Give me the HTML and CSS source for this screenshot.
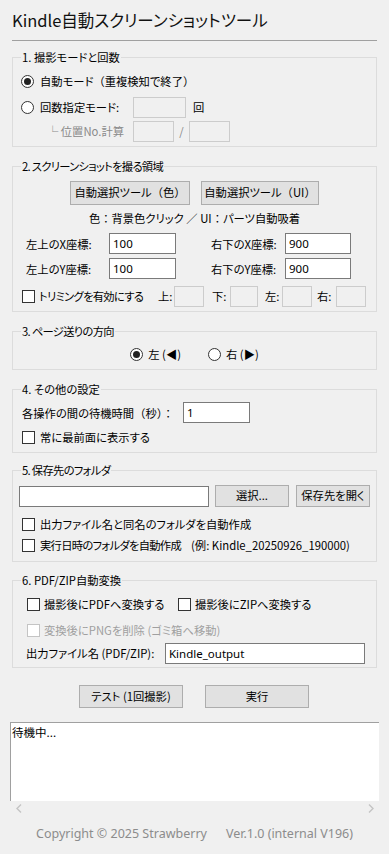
FILE: index.html
```html
<!DOCTYPE html>
<html lang="ja">
<head>
<meta charset="utf-8">
<title>Kindle自動スクリーンショットツール</title>
<link rel="stylesheet" href="styles.css">
</head>
<body>
<div class="app">
  <h1 class="title">Kindle自動スクリーンショットツール</h1>
  <div class="sep"></div>

  <fieldset class="group g1">
    <legend>1. 撮影モードと回数</legend>
    <div class="row r22">
      <span class="radio on"></span><span class="rtext">自動モード<span class="fw">（</span>重複検知で終了<span class="fw">）</span></span>
    </div>
    <div class="row r22 mt4">
      <span class="radio"></span><span class="rtext w-count">回数指定モード:</span>
      <input class="entry dis w53" type="text" disabled>
      <span class="unit">回</span>
    </div>
    <div class="row r22 mt2">
      <span class="sub">└ 位置No.計算</span>
      <input class="entry dis w41" type="text" disabled>
      <span class="slash">/</span>
      <input class="entry dis w41" type="text" disabled>
    </div>
  </fieldset>

  <fieldset class="group g2">
    <legend class="tight">2. スクリーンショットを撮る領域</legend>
    <div class="row btnrow">
      <button class="btn bw120">自動選択ツール<span class="fw">（</span>色<span class="fw">）</span></button>
      <button class="btn bw118">自動選択ツール<span class="fw">（</span>UI<span class="fw">）</span></button>
    </div>
    <div class="row hint">色<span class="fw">：</span>背景色クリック <span class="fw">／</span> UI<span class="fw">：</span>パーツ自動吸着</div>
    <div class="row r21 mt5">
      <span class="clabel l1">左上のX座標:</span>
      <input class="entry w67" type="text" value="100">
      <span class="clabel l2">右下のX座標:</span>
      <input class="entry w66" type="text" value="900">
    </div>
    <div class="row r21 mt4">
      <span class="clabel l1">左上のY座標:</span>
      <input class="entry w67" type="text" value="100">
      <span class="clabel l2">右下のY座標:</span>
      <input class="entry w66" type="text" value="900">
    </div>
    <div class="row r20 mt7">
      <span class="check c-trim"></span><span class="trimtext tight">トリミングを有効にする</span>
      <span class="tl t-up">上:</span><input class="entry dis w30" type="text" disabled>
      <span class="tl t-down">下:</span><input class="entry dis w28" type="text" disabled>
      <span class="tl t-left">左:</span><input class="entry dis w30" type="text" disabled>
      <span class="tl t-right">右:</span><input class="entry dis w30" type="text" disabled>
    </div>
  </fieldset>

  <fieldset class="group g3">
    <legend class="tight">3. ページ送りの方向</legend>
    <div class="row r20 center">
      <span class="radio on"></span><span class="dtext">左 (◀)</span>
      <span class="radio r-second"></span><span class="dtext">右 (▶)</span>
    </div>
  </fieldset>

  <fieldset class="group g4">
    <legend>4. その他の設定</legend>
    <div class="row r21">
      <span class="wait">各操作の間の待機時間<span class="fw">（</span>秒<span class="fw">）：</span></span>
      <input class="entry w67" type="text" value="1">
    </div>
    <div class="row r20 mt4">
      <span class="check c1"></span><span class="ctext">常に最前面に表示する</span>
    </div>
  </fieldset>

  <fieldset class="group g5">
    <legend class="tight">5. 保存先のフォルダ</legend>
    <div class="row r22">
      <input class="entry folder" type="text">
      <button class="btn sel">選択...</button>
      <button class="btn open">保存先を開く</button>
    </div>
    <div class="row r20 mt7">
      <span class="check c1"></span><span class="ctext">出力ファイル名と同名のフォルダを自動作成</span>
    </div>
    <div class="row r20 mt1">
      <span class="check c1"></span><span class="ctext tight">実行日時のフォルダを自動作成</span><span class="example">(例: Kindle_20250926_190000)</span>
    </div>
  </fieldset>

  <fieldset class="group g6">
    <legend>6. PDF/ZIP自動変換</legend>
    <div class="row r20">
      <span class="check c6"></span><span class="ctext6 pdf">撮影後にPDFへ変換する</span>
      <span class="check"></span><span class="ctext6">撮影後にZIPへ変換する</span>
    </div>
    <div class="row r20 mt6">
      <span class="check c6 dis"></span><span class="ctext6 gray">変換後にPNGを削除 (ゴミ箱へ移動)</span>
    </div>
    <div class="row r22 mt2">
      <span class="outlabel">出力ファイル名 (PDF/ZIP):</span>
      <input class="entry w200" type="text" value="Kindle_output">
    </div>
  </fieldset>

  <div class="actions">
    <button class="btn act">テスト (1回撮影)</button>
    <button class="btn act">実行</button>
  </div>

  <div class="log">待機中...</div>
  <div class="scroll">
    <svg class="arrow" width="6" height="9" viewBox="0 0 6 9"><path d="M5 0.5 L1 4.5 L5 8.5" fill="none" stroke="#c4c4c4" stroke-width="1.4"/></svg>
    <svg class="arrow" width="6" height="9" viewBox="0 0 6 9"><path d="M1 0.5 L5 4.5 L1 8.5" fill="none" stroke="#c4c4c4" stroke-width="1.4"/></svg>
  </div>
  <div class="footer">
    <span>Copyright © 2025 Strawberry</span>
    <span>Ver.1.0 (internal V196)</span>
  </div>
</div>
</body>
</html>
```

FILE: styles.css
```css
* { box-sizing: border-box; }

html, body {
  margin: 0;
  background: #f0f0f0;
}

body {
  font-family: "Noto Sans CJK JP", "Noto Sans", sans-serif;
  font-size: 11.3px;
  color: #000;
  font-feature-settings: "palt" 1;
}

.fw { font-feature-settings: "palt" 0; }
.tight { letter-spacing: -0.7px; }

.app {
  width: 389px;
  height: 854px;
  padding: 8px 12px 0 12px;
  overflow: hidden;
}

.title {
  margin: 0;
  font-size: 16.5px;
  font-weight: normal;
  line-height: 24px;
  height: 24px;
  color: #111;
  white-space: nowrap;
}

.sep {
  height: 1px;
  background: #a0a0a0;
  margin-top: 8px;
}

.group {
  border: 1px solid #dcdcdc;
  margin: 0;
  padding: 0 8px;
  min-width: 0;
}

.group legend {
  padding: 0 1px;
  font-size: 11.3px;
  line-height: 16px;
}

.g1 { margin-top: 8px; padding-top: 5px; padding-bottom: 4px; }
.g2 { margin-top: 11px; padding-top: 7px; padding-bottom: 5px; }
.g3 { margin-top: 11px; padding-top: 5px; padding-bottom: 5px; }
.g4 { margin-top: 11px; padding-top: 5px; padding-bottom: 5px; }
.g5 { margin-top: 9px; padding-top: 7px; padding-bottom: 6px; }
.g6 { margin-top: 10px; padding-top: 6px; padding-bottom: 3px; }

.row {
  display: flex;
  align-items: center;
  white-space: nowrap;
}

.r20 { height: 20px; }
.r21 { height: 21px; }
.r22 { height: 22px; }
.mt1 { margin-top: 1px; }
.mt2 { margin-top: 2px; }
.mt4 { margin-top: 4px; }
.mt5 { margin-top: 5px; }
.mt6 { margin-top: 6px; }
.mt7 { margin-top: 7px; }

.center { justify-content: center; }

.radio {
  width: 13px;
  height: 13px;
  flex: none;
  border: 1px solid #333;
  border-radius: 50%;
  background: #fff;
  display: flex;
  align-items: center;
  justify-content: center;
}

.radio.on::after {
  content: "";
  width: 7px;
  height: 7px;
  border-radius: 50%;
  background: #222;
}

.check {
  width: 13px;
  height: 13px;
  flex: none;
  border: 1px solid #333;
  background: #fff;
}

.check.dis { border-color: #c4c4c4; }

.entry {
  height: 21px;
  flex: none;
  margin: 0;
  padding: 0 3px;
  border: 1px solid #7a7a7a;
  background: #fff;
  font-family: "Noto Sans", "Noto Sans CJK JP", sans-serif;
  font-size: 11.5px;
  color: #000;
  outline: none;
}

.entry.dis {
  border-color: #cccccc;
  background: #f0f0f0;
}

.w28 { width: 28px; }
.w30 { width: 30px; }
.w41 { width: 41px; }
.w53 { width: 53px; }
.w66 { width: 66px; }
.w67 { width: 67px; }
.w200 { width: 200px; }

.btn {
  flex: none;
  margin: 0;
  padding: 0;
  border: 1px solid #adadad;
  background: #e1e1e1;
  font-family: "Noto Sans CJK JP", "Noto Sans", sans-serif;
  font-feature-settings: "palt" 1;
  font-size: 11.3px;
  color: #000;
  line-height: 1;
  white-space: nowrap;
}

.rtext { margin-left: 6px; }
.w-count { width: 93px; flex: none; }
.unit { margin-left: 7px; }
.sub {
  margin-left: 26px;
  width: 86px;
  flex: none;
  color: #8a8a8a;
}
.slash {
  width: 15px;
  text-align: center;
  color: #8a8a8a;
}

.btnrow {
  height: 24px;
  justify-content: center;
  gap: 11px;
}
.bw120 { width: 120px; height: 24px; }
.bw118 { width: 118px; height: 24px; }

.hint {
  height: 20px;
  margin-top: 3px;
  justify-content: center;
  white-space: pre;
}

.clabel { flex: none; }
.l1 { margin-left: 5px; width: 83px; }
.l2 { margin-left: 35px; width: 74px; }

.c-trim { margin-left: 1px; }
.trimtext { margin-left: 4px; width: 119px; flex: none; }
.tl { flex: none; }
.t-up { width: 16px; }
.t-down { margin-left: 8px; width: 18px; }
.t-left { margin-left: 7px; width: 17px; }
.t-right { margin-left: 5px; width: 19px; }

.dtext { margin-left: 5px; }
.r-second { margin-left: 27px; }

.wait { margin-left: 1px; width: 161px; flex: none; }
.c1 { margin-left: 1px; }
.ctext { margin-left: 5px; }

.folder { margin-left: -2px; width: 190px; }
.sel { margin-left: 6px; width: 74px; height: 22px; }
.open { margin-left: 7px; width: 74px; height: 22px; }
.example { margin-left: 10px; }

.c6 { margin-left: 6px; }
.ctext6 { margin-left: 4px; }
.pdf { width: 134px; flex: none; }
.gray { color: #a0a0a0; }
.outlabel { margin-left: 5px; width: 139px; flex: none; }

.actions {
  display: flex;
  justify-content: center;
  gap: 22px;
  margin-top: 17px;
  height: 23px;
  padding-right: 1px;
}
.act { width: 104px; height: 23px; }

.log {
  margin-top: 14px;
  margin-left: -2px;
  width: 369px;
  height: 79px;
  background: #fff;
  border-top: 1px solid #a0a0a0;
  border-left: 1px solid #a0a0a0;
  padding: 1px 0 0 1px;
  line-height: 16px;
  font-size: 11.5px;
}

.scroll {
  height: 15px;
  margin-left: -2px;
  width: 369px;
  display: flex;
  align-items: center;
  justify-content: space-between;
  padding: 0 5px 0 6px;
}

.footer {
  margin-top: 2px;
  height: 30px;
  display: flex;
  align-items: center;
  justify-content: center;
  gap: 19px;
  font-family: "Noto Sans", sans-serif;
  font-size: 12.5px;
  color: #8c8c8c;
  white-space: nowrap;
}
```
